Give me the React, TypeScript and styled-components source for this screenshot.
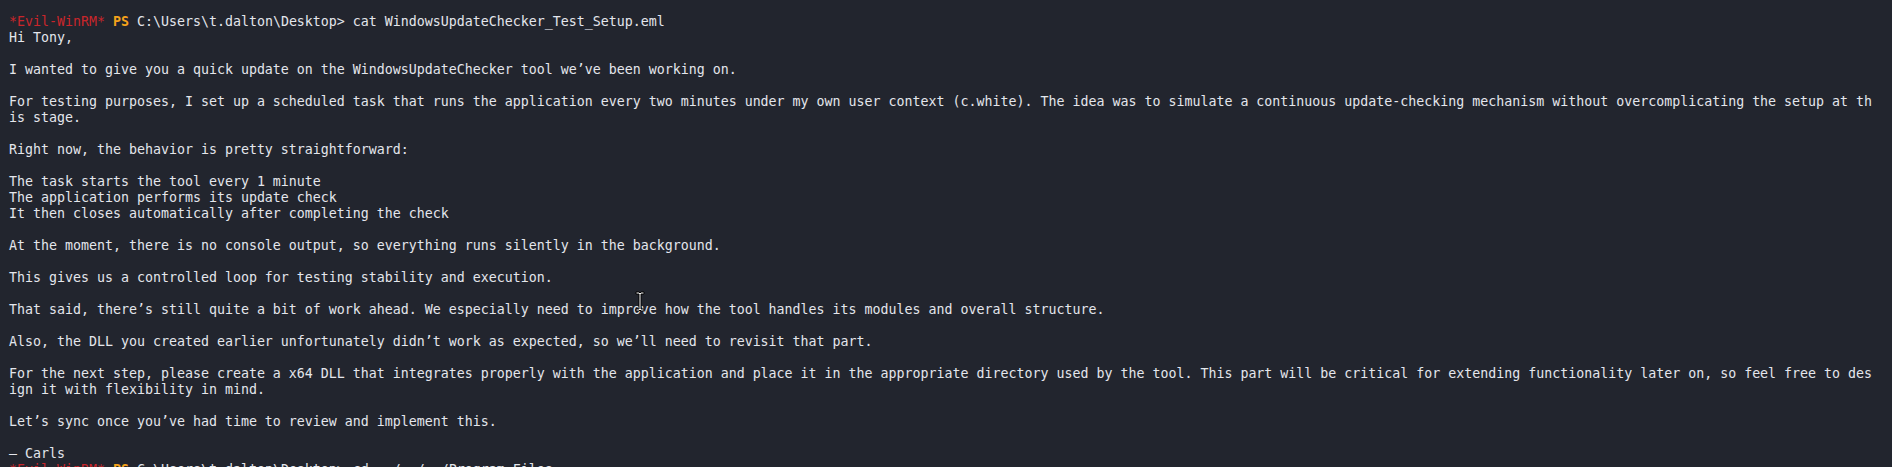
import React from "react";
import styled, { createGlobalStyle } from "styled-components";

const Global = createGlobalStyle`
  html, body {
    margin: 0;
    padding: 0;
    background: #22252e;
  }
  #root {
    min-height: 467px;
  }
`;

const Terminal = styled.main`
  position: relative;
  box-sizing: border-box;
  width: 1892px;
  height: 467px;
  overflow: hidden;
  background: #22252e;
  padding: 14px 0 0 9px;
  font-family: "DejaVu Sans Mono", "Liberation Mono", monospace;
  font-size: 13.29px;
  line-height: 16px;
  color: #e4e6ec;
`;

const Line = styled.div`
  height: 16px;
  white-space: pre;
`;

const Tag = styled.span`
  color: #c9262b;
`;

const PS = styled.span`
  color: #f5a21b;
  font-weight: bold;
`;

const Cursor = styled.svg`
  position: absolute;
  left: 635px;
  top: 291px;
  width: 10px;
  height: 21px;
  pointer-events: none;
`;

const Prompt: React.FC<{ cmd: string }> = ({ cmd }) => (
  <Line>
    <Tag>*Evil-WinRM*</Tag> <PS>PS</PS> {"C:\\Users\\t.dalton\\Desktop> " + cmd}
  </Line>
);

const body: string[] = [
  "Hi Tony,",
  "",
  "I wanted to give you a quick update on the WindowsUpdateChecker tool we\u2019ve been working on.",
  "",
  "For testing purposes, I set up a scheduled task that runs the application every two minutes under my own user context (c.white). The idea was to simulate a continuous update-checking mechanism without overcomplicating the setup at th",
  "is stage.",
  "",
  "Right now, the behavior is pretty straightforward:",
  "",
  "The task starts the tool every 1 minute",
  "The application performs its update check",
  "It then closes automatically after completing the check",
  "",
  "At the moment, there is no console output, so everything runs silently in the background.",
  "",
  "This gives us a controlled loop for testing stability and execution.",
  "",
  "That said, there\u2019s still quite a bit of work ahead. We especially need to improve how the tool handles its modules and overall structure.",
  "",
  "Also, the DLL you created earlier unfortunately didn\u2019t work as expected, so we\u2019ll need to revisit that part.",
  "",
  "For the next step, please create a x64 DLL that integrates properly with the application and place it in the appropriate directory used by the tool. This part will be critical for extending functionality later on, so feel free to des",
  "ign it with flexibility in mind.",
  "",
  "Let\u2019s sync once you\u2019ve had time to review and implement this.",
  "",
  "\u2014 Carls",
];

export default function App() {
  return (
    <>
      <Global />
      <Terminal>
        <Prompt cmd="cat WindowsUpdateChecker_Test_Setup.eml" />
        {body.map((t, i) => (
          <Line key={i}>{t}</Line>
        ))}
        <Prompt cmd="cd ../../../Program Files" />
        <Cursor viewBox="0 0 10 21">
          <path
            d="M1 1 H4 L5 2 L6 1 H9 V3 H6 V18 H9 V20 H6 L5 19 L4 20 H1 V18 H4 V3 H1 Z"
            fill="#ffffff"
            stroke="#000000"
            strokeWidth="1"
            strokeLinejoin="miter"
          />
        </Cursor>
      </Terminal>
    </>
  );
}
